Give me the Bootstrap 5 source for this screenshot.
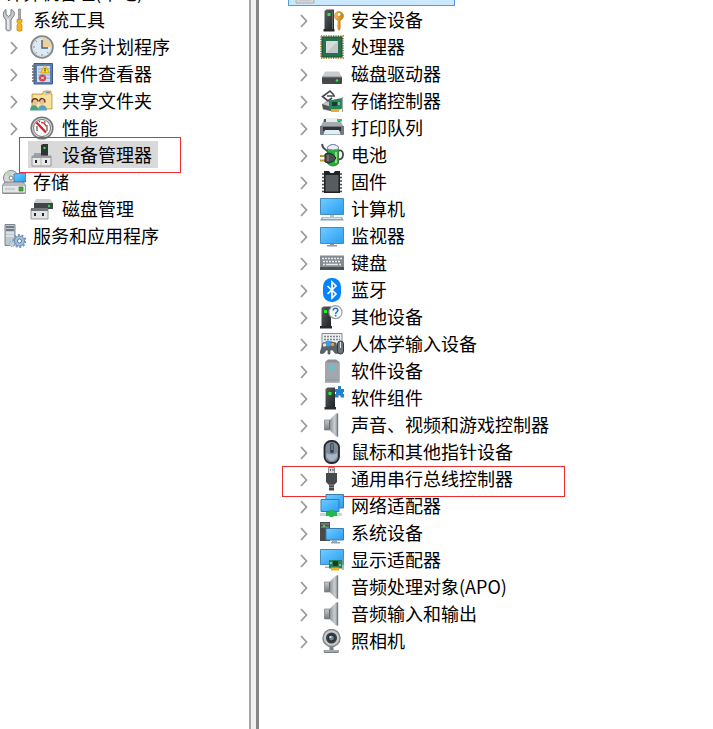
<!DOCTYPE html>
<html lang="zh-CN">
<head>
<meta charset="utf-8">
<meta name="viewport" content="width=device-width, initial-scale=1">
<title>计算机管理</title>
<link href="https://cdn.jsdelivr.net/npm/bootstrap@5.3.0/dist/css/bootstrap.min.css" rel="stylesheet">
<style>
  body { font-family: "Noto Sans CJK SC", sans-serif; font-size: 18px; line-height: 27px; color: #000; background: #fff; }
  .side-pane { flex: 0 0 249px; }
  .splitter { flex: 0 0 10px; background: #f0f0f0; border-left: 2px solid #a3a5ad; border-right: 3px solid #858585; }
  .tree { margin-top: -21px; }
  .tree-row { height: 27px; white-space: nowrap; }
  .side-pane .tree-row { padding-left: 2px; }
  .side-pane .tree-root { padding-left: 5px; }
  .main-pane .tree-row { padding-left: 33px; }
  .toggle { width: 28px; height: 27px; flex: none; line-height: 0; }
  .toggle svg { width: 10px; height: 16px; margin-left: 7px; margin-top: 2px; fill: none; stroke: #9a9a9a; stroke-width: 1.8; }
  .ico { width: 24px; height: 24px; flex: none; }
  .node-label { padding-left: 7px; }
  .side-pane .sub .node-label { padding-left: 8px; }
  .side-pane .tree-row.sub.leaf { padding-left: 28px; }
  .picked { background: #d9d9d9; padding: 0 6px 0 2px; }
  .leaf-plain { padding-left: 2px; }
  .root-picked { width: 167px; height: 27px; margin-left: -4px; background: #cce8ff; border: 1px solid #4a9be0; padding-left: 4px; }
  .callout-box { position: absolute; border: 1px solid #f02b2b; pointer-events: none; }
  .callout-side { left: 19px; top: -4px; width: 162px; height: 36px; }
  .callout-main { left: 23px; top: 1px; width: 283px; height: 31px; }
</style>
</head>
<body>
<svg width="0" height="0" class="position-absolute" aria-hidden="true">
  <defs>
    <linearGradient id="gBlue" x1="0" y1="0" x2="1" y2="1"><stop offset="0" stop-color="#74ccff"/><stop offset=".5" stop-color="#4bb5fb"/><stop offset="1" stop-color="#2e9cee"/></linearGradient>
    <linearGradient id="gSteel" x1="0" y1="0" x2="0" y2="1"><stop offset="0" stop-color="#c6cacd"/><stop offset="1" stop-color="#75797e"/></linearGradient>
    <linearGradient id="gSide" x1="0" y1="0" x2="1" y2="0"><stop offset="0" stop-color="#83888d"/><stop offset=".6" stop-color="#c9cdd0"/><stop offset="1" stop-color="#9a9fa4"/></linearGradient>
    <linearGradient id="gDark" x1="0" y1="0" x2="1" y2="1"><stop offset="0" stop-color="#5b5e60"/><stop offset="1" stop-color="#202325"/></linearGradient>
    <linearGradient id="gGold" x1="0" y1="0" x2="1" y2="0"><stop offset="0" stop-color="#f5bd54"/><stop offset="1" stop-color="#c47c16"/></linearGradient>
  </defs>
  <symbol id="chev" viewBox="0 0 10 16"><path d="M2 2l5.500 6L2 14"/></symbol>

  <symbol id="tools" viewBox="0 0 24 24">
    <path d="M4 1.500v5l2.500 2 2.500-2v-5c4 1 4.500 6 1 8.500L9 12v9c0 2.500-5 2.500-5 0v-9C.5 9 .5 3.500 4 1.500z" fill="#c9cccf" stroke="#777b80"/><path d="M6 11v10" stroke="#f4f4f4" stroke-width="1.500"/>
    <path d="M16.500 1h2v10h-2z" fill="#a7a9ac" stroke="#77797c" stroke-width=".6"/><path d="M15 11.500h5v3l-1 1 1 2v5q-2.500 1.500-5 0v-5l1-2-1-1z" fill="#f5b51b" stroke="#bd8206" stroke-width=".7"/>
  </symbol>
  <symbol id="clock" viewBox="0 0 24 24">
    <circle cx="12" cy="12" r="10.800" fill="#f1f3f5" stroke="#85888b" stroke-width="2"/><circle cx="12" cy="12" r="9.300" fill="#dfe9f4" stroke="#d4d6d8" stroke-width="1.200"/>
    <path d="M12 12V3a9 9 0 0 1 9 9z" fill="#efd196"/><path d="M12 5v8h6" fill="none" stroke="#49617f" stroke-width="1.500"/>
    <path d="M12 19v2M3 12h2M5.600 5.600l1.300 1.300M5.600 18.400l1.300-1.300M18.400 18.400l-1.300-1.300" stroke="#7d91a8"/>
  </symbol>
  <symbol id="events" viewBox="0 0 24 24">
    <path d="M4 1.500h18.500v20.500H4z" fill="#5f7fae" stroke="#3c5c8b"/><path d="M7 4h13v16H7z" fill="#cfdeef"/><path d="M8 7h12M8 10h12M8 13h12M8 16h12" stroke="#8eacd0"/>
    <path d="M2 4h4M2 7h4M2 10h4M2 13h4M2 16h4M2 19h4" stroke="#65676b" stroke-width="1.300"/><path d="M15 3l4.500 8h-9z" fill="#ffdc22" stroke="#d0a515" stroke-width=".8"/><path d="M15 6v3M15 9.500v1" stroke="#333"/>
    <circle cx="12.500" cy="16" r="3.600" fill="#d8404b"/><path d="M11.200 14.700l2.600 2.600M13.800 14.700l-2.600 2.600" stroke="#fff"/>
  </symbol>
  <symbol id="shared" viewBox="0 0 24 24">
    <path d="M2 5h10l2-3h7v3h1v15H2z" fill="#efcd78" stroke="#bc9442" stroke-width=".8"/><path d="M3 6h18v13H3z" fill="#f9e29d"/><path d="M16 3.500h4" stroke="#4e91d6" stroke-width="1.400"/>
    <path d="M0 21.500c0-7 8-7 8.500 0z" fill="#44a579"/><path d="M8 21.500c0-7 9-7 9 0z" fill="#5d9ecb"/><circle cx="5" cy="13.500" r="2.600" fill="#eabf99"/><circle cx="12" cy="13" r="2.600" fill="#eabf99"/>
    <path d="M2 13.500c0-5 6-4.500 6-1M9.500 12.500c0-4 5.500-4 5.500 1" fill="none" stroke="#5b3c25" stroke-width="1.500"/>
  </symbol>
  <symbol id="perf" viewBox="0 0 24 24">
    <circle cx="12" cy="12" r="10.800" fill="#dcdcdc" stroke="#77797b" stroke-width="1.600"/><circle cx="12" cy="12" r="8.500" fill="#fff" stroke="#777"/>
    <path d="M7 15V10M17 15V9M9 6l1-1M14 5.500l1.500 1" stroke="#555" stroke-width="1.200"/><path d="M6.500 6.500l9.500 10" stroke="#df1721" stroke-width="2.200"/><path d="M11 6.500q4 0 5 4" fill="none" stroke="#e53b43" stroke-width="1.500"/>
  </symbol>
  <symbol id="devmgr" viewBox="0 0 24 24">
    <path d="M11 2l2-1h5v13h-7z" fill="#303436"/><circle cx="14.500" cy="5" r="1.200" fill="#2de43b"/><path d="M4 10h7v3H4z" fill="#9fa1a3"/>
    <path d="M2 13h19v10H2z" fill="#e8e8e8" stroke="#96989a"/><path d="M2 13h19v2H2z" fill="#9b9d9f"/><path d="M5 17h2v3H5zM15 17h2v3h-2z" fill="#262829"/><path d="M11 15v8" stroke="#b4b6b8"/>
  </symbol>
  <symbol id="storage" viewBox="0 0 24 24">
    <circle cx="9" cy="8" r="7.500" fill="#d7dadd" stroke="#85898c"/><path d="M9 8L3 3a7 7 0 0 1 5-2z" fill="#b5d9bd"/><circle cx="9" cy="8" r="2" fill="#fff" stroke="#888"/>
    <path d="M12 4l12-1v9H12z" fill="url(#gBlue)" stroke="#34718f" stroke-width=".8"/><path d="M3 12h18l3 4v6q0 1.500-2 1.500H2Q0 23.500 0 22v-6z" fill="#b9bdc1" stroke="#71767b" stroke-width=".8"/>
    <path d="M1 16h22v6H1z" fill="#e3e6e8"/><path d="M17 17h4v4h-4z" fill="#42aa37" stroke="#427139" stroke-width=".7"/><path d="M3 19h10" stroke="#aeb2b6"/>
  </symbol>
  <symbol id="diskmgr" viewBox="0 0 24 24">
    <path d="M6 2h14l3 4H4z" fill="#c9cccf"/><path d="M4 6h19v6H4z" fill="#414548"/><circle cx="19" cy="9" r="1.200" fill="#26df45"/>
    <path d="M1 12h17v10H1z" fill="#e5e5e5" stroke="#989a9c"/><path d="M1 11h17v3H1z" fill="#737679"/><path d="M4 16h2v3H4zM12 16h2v3h-2z" fill="#262829"/>
  </symbol>
  <symbol id="services" viewBox="0 0 24 24">
    <path d="M3 .5h10v21H3z" fill="#c0c9d0" stroke="#7b858e"/><path d="M4 3h8M4 6h8" stroke="#58626c" stroke-width="1.500"/><path d="M4 9h8M4 12h8" stroke="#f4f6f8"/>
    <circle cx="17.500" cy="17" r="6" fill="none" stroke="#7798b8" stroke-width="2" stroke-dasharray="2 1.700"/><circle cx="17.500" cy="17" r="5" fill="#a5bfd8" stroke="#648bb0"/><circle cx="17.500" cy="17" r="2" fill="#fff" stroke="#4d7dad"/>
    <circle cx="10" cy="20" r="2.600" fill="#c0cfdd" stroke="#7899b8" stroke-dasharray="1 1"/>
  </symbol>

  <symbol id="security" viewBox="0 0 24 24">
    <path d="M4.500 3l2-1.500h7.500v20H4.500z" fill="url(#gDark)"/><path d="M3.500 21h11v2.500h-11z" fill="#27292b"/><path d="M7.500 5h3v3h-3z" fill="#20f22d"/><path d="M12.500 3v18" stroke="#686c6f"/>
    <circle cx="19" cy="8" r="4.500" fill="url(#gGold)" stroke="#bd8230" stroke-width=".6"/><circle cx="19" cy="6.500" r="1.400" fill="#fff"/><path d="M17.500 12h3v9l-1.500 2-1.500-2v-2l-1-1 1-1z" fill="url(#gGold)"/>
  </symbol>
  <symbol id="cpu" viewBox="0 0 24 24">
    <rect x="1" y="1" width="22" height="22" fill="none" stroke="#b18b38" stroke-width="2" stroke-dasharray="1.200 1.200"/><path d="M2 2h20v20H2z" fill="#25704f" stroke="#164f36"/><path d="M6 6h12v12H6z" fill="#d9dada"/><path d="M6 18L18 6v12z" fill="#c4c7c7"/>
  </symbol>
  <symbol id="hdd" viewBox="0 0 24 24"><path d="M5 9.500h14l3 6H2z" fill="#c9ccce"/><path d="M2 15h20v6q0 1-1 1H3q-1 0-1-1z" fill="#45494c"/><path d="M2 15h20" stroke="#85888b"/><circle cx="17" cy="18.500" r="1.300" fill="#28ef45"/></symbol>
  <symbol id="storctl" viewBox="0 0 24 24">
    <path d="M2 15l4-3h10v8l-4 2-9-1z" fill="#bfc3c6"/><path d="M2 15l9 3v4l-8-2z" fill="#505457"/><path d="M14 6l-4-4-7.500 5.500L8 12l4-3M7 7h8" fill="none" stroke="#45484b" stroke-width="1.700"/>
    <path d="M9 11.500l13-2.500v10.500l-2 1H9z" fill="#26855c"/><path d="M12 13h5v4h-5z" fill="#193f2f"/><path d="M22.500 8v15" stroke="#a3a8aa" stroke-width="1.200"/><path d="M11 20h8v3h-8z" fill="#efac20"/><path d="M18 13h2v3h-2z" fill="#79c4a0"/>
  </symbol>
  <symbol id="printer" viewBox="0 0 24 24">
    <path d="M4 3h16l1 5H3z" fill="#54585b"/><path d="M6 2h12v5H6z" fill="#e9edf0"/><path d="M3 6h18l3 5H0z" fill="#a5abb0"/><path d="M0 10h24v8q0 1-1 1H1q-1 0-1-1z" fill="#747a7f"/><path d="M3 11h18v4H3z" fill="#303437"/><path d="M5 14h14l1.500 4.500h-17z" fill="#dceefa"/><path d="M17 3h5v2.500h-5z" fill="#27ce65"/>
  </symbol>
  <symbol id="battery" viewBox="0 0 24 24">
    <path d="M2 1c1 7 5 4 6 9M18 8c6-3 6 6 3 8l-5 1" fill="none" stroke="#44484b" stroke-width="1.800"/><path d="M7.500 4q5.500-5 11 0v16.500q-5.500 5-11 0z" fill="#24b23a" stroke="#397e43"/><path d="M7.500 4q5.500-5 11 0v2q-5.500 2-11 0z" fill="#eceefb" stroke="#8b8bb4"/><path d="M16 9v11" stroke="#85e278" stroke-width="2" fill="none"/>
    <path d="M0 13h6M0 17.500h6" stroke="#c7932e" stroke-width="2"/><path d="M5 11l4-1q5 1 7 5-2 4-7 5l-4-1z" fill="#4c4e50" stroke="#242627"/><path d="M8 12v6" stroke="#909395"/>
  </symbol>
  <symbol id="firmware" viewBox="0 0 24 24">
    <path d="M2 4h20M2 7.500h20M2 11h20M2 14.500h20M2 18h20M2 21.500h20" stroke="#45484a" stroke-width="1.600"/><path d="M4 1h5l1.500 2h3L15 1h5v22H4z" fill="#202324"/><path d="M5.500 5h13v16.500h-13z" fill="#585c5e"/>
  </symbol>
  <symbol id="computer" viewBox="0 0 24 24"><path d="M.5 1.500h23v16H.5z" fill="url(#gBlue)" stroke="#428dbb"/><path d="M10 18h4v2h-4z" fill="#b3c2cc"/><path d="M2 20h20l2 3.500H0z" fill="#8fa3b1"/><path d="M3 20.500h18l1 1.500H2z" fill="#d8e5ec"/></symbol>
  <symbol id="monitor" viewBox="0 0 24 24"><path d="M.5 3.500h23v16H.5z" fill="url(#gBlue)" stroke="#428dbb"/><path d="M10 20h4v1h3v1.500H7V21h3z" fill="#8a9ba7"/></symbol>
  <symbol id="keyboard" viewBox="0 0 24 24"><path d="M0 4.500h24v14.500H0z" fill="#858b91"/><path d="M0 16h24v3H0z" fill="#4b5257"/><path d="M2 7.500h20M3 10.500h18" stroke="#e8ebed" stroke-width="1.500" stroke-dasharray="2 1"/><path d="M3 13.500h2M6 13.500h12M19 13.500h2" stroke="#e8ebed" stroke-width="1.500"/></symbol>
  <symbol id="bluetooth" viewBox="0 0 24 24"><rect x="3" y="0" width="18" height="24" rx="8.500" fill="#0683fb"/><path d="M7.500 8l8.500 8-4 4V4l4 4-8.500 8" fill="none" stroke="#fff" stroke-width="1.700"/></symbol>
  <symbol id="other" viewBox="0 0 24 24"><path d="M1.500 3l2-1.500h7.500v20H1.500z" fill="url(#gDark)"/><path d="M0 21h12v2.500H0z" fill="#27292b"/><path d="M4 5h3v3H4z" fill="#22ed2f"/><circle cx="15.500" cy="7.200" r="6.500" fill="#f6f8f9" stroke="#999fa3" stroke-width="1.200"/><path d="M13.200 5.500q0-2.200 2.300-2.200t2.300 2.200q0 1-1.100 1.700t-1.100 2M15.600 10v1.600" fill="none" stroke="#2f77c5" stroke-width="1.600"/></symbol>
  <symbol id="hid" viewBox="0 0 24 24">
    <path d="M2 1.500h20v13H2z" fill="#eceff1" stroke="#858b91"/><path d="M4 4.500h16M4 7.500h16" stroke="#7f868d" stroke-width="1.400" stroke-dasharray="2 1"/>
    <path d="M3 11q6-3 13 0l2 10q-3 2-5-3h-3v4H8v-4H6q-2 5-6 3z" fill="#5b636a" stroke="#474e53" stroke-width=".7"/><circle cx="8" cy="11.500" r="3" fill="#359df0"/><circle cx="12.500" cy="12.500" r="1.800" fill="#ee982e"/><circle cx="4.500" cy="13" r="1.700" fill="#f0e4e0"/>
    <rect x="17.500" y="9" width="6" height="13" rx="3" fill="#6c757d" stroke="#30363b"/><path d="M20.500 10v6" stroke="#e4e7e9"/>
  </symbol>
  <symbol id="softdev" viewBox="0 0 24 24"><path d="M5 3l3-2.500h8L19.500 3v20.500H5z" fill="#899197"/><path d="M5 3.500h14.500v20H5z" fill="#a0a8ae"/><circle cx="12" cy="8.500" r="2" fill="#3ad3ee"/><path d="M6 21h12" stroke="#8d959b"/></symbol>
  <symbol id="softcomp" viewBox="0 0 24 24"><path d="M5.500 3l2-1.500H15V21H5.500z" fill="url(#gDark)"/><path d="M4.500 21H16v2.500H4.500z" fill="#292c2e"/><path d="M8.500 6h3v3h-3z" fill="#25ed32"/><path d="M15 3h3V0h3v3h3v3h-1v2h1v3.500h-3.500v-2h-2v2H15V8h1V6h-1z" fill="#2583cc"/></symbol>
  <symbol id="speaker" viewBox="0 0 24 24"><path d="M4.500 7h5v10h-5z" fill="url(#gSteel)" stroke="#777c81" stroke-width=".7"/><path d="M9 7.500L16 .5h2v23h-2l-7-7z" fill="url(#gSide)"/><path d="M17.500.5v23" stroke="#777d82" stroke-width="1.400"/><path d="M9.500 7.500v9" stroke="#666b70"/></symbol>
  <symbol id="mouse" viewBox="0 0 24 24"><rect x="4.500" y="1" width="14.500" height="22" rx="6.500" fill="#7d8b9a" stroke="#262a2e" stroke-width="1.800"/><path d="M6.500 13q5 3 10.500 0v4q-5.200 8-10.500 0z" fill="#a8b7c7"/><rect x="10.200" y="3" width="3.500" height="10" rx="1.500" fill="#353e48"/><path d="M12 4v6" stroke="#a2aab2"/></symbol>
  <symbol id="usb" viewBox="0 0 24 24"><path d="M8.500.5h6v6h-6z" fill="#d8d9da" stroke="#888b8d"/><path d="M10 2h1v2h-1zM12.500 2h1v2h-1z" fill="#555"/><path d="M6 6h11v9l-3 3v5.500H9V18l-3-3z" fill="#46494b"/><path d="M9 18h5M9 20.500h5" stroke="#8a8d8f"/></symbol>
  <symbol id="network" viewBox="0 0 24 24"><path d="M6 .5h17.500V14H6z" fill="url(#gBlue)" stroke="#397ca9"/><path d="M1 5.500h18V17.500H1z" fill="url(#gBlue)" stroke="#397ca9"/><path d="M0 19h22v3H0z" fill="#c9d3d9"/><path d="M9 16h5v2h3v4h-3l-1 1h-3l-1-1H6v-4h3z" fill="#26b64e"/></symbol>
  <symbol id="system" viewBox="0 0 24 24"><path d="M0 1h10v19H0z" fill="#464a4d"/><path d="M1 3h8M1 6h8" stroke="#979da1"/><path d="M3 4h2v2H3z" fill="#2fe941"/><path d="M6 7.500h17.500V19H6z" fill="url(#gBlue)" stroke="#397ca9"/><path d="M12 19.500h5V21h3v1.500h-9V21h1z" fill="#96a6b0"/></symbol>
  <symbol id="display" viewBox="0 0 24 24"><path d="M.5 1.500h23v15H.5z" fill="url(#gBlue)" stroke="#428dbb"/><path d="M5 18.500h6V20H5z" fill="#a2afb8"/><path d="M9 12h13v8.500H9z" fill="#278256"/><path d="M13 13h5v5h-5z" fill="#183d2c"/><path d="M23 10v12" stroke="#888f93" stroke-width="1.300"/><path d="M11 19.500h8v3h-8z" fill="#efaf25"/><path d="M10 15h2M19 17h2" stroke="#9fd6b4" stroke-width="1.500"/></symbol>
  <symbol id="camera" viewBox="0 0 24 24"><path d="M9.500 17h4v4h5q1 3-1 3H5q-2 0-1-3h5.500z" fill="#777d80"/><path d="M4.500 22h13.500" stroke="#d3d6d8"/><circle cx="11.500" cy="9" r="8.500" fill="#c8cbcd" stroke="#85898c" stroke-width="1.500"/><circle cx="11.500" cy="9" r="5.500" fill="#383d41"/><circle cx="11.500" cy="9" r="3" fill="#6d8798" stroke="#1f2426"/><circle cx="10.500" cy="8" r="1.100" fill="#deedf5"/></symbol>
  <symbol id="host" viewBox="0 0 24 24"><path d="M3 2h18v20H3z" fill="#d5d9dc" stroke="#a8adb1"/><path d="M6 19h12" stroke="#b6babd"/></symbol>
</svg>

<div class="d-flex min-vh-100 overflow-hidden">
  <nav class="side-pane" aria-label="控制台树">
    <ul class="tree list-unstyled mb-0">
      <li class="tree-row tree-root">计算机管理(本地)</li>
      <li class="tree-row d-flex align-items-center"><svg class="ico"><use href="#tools"/></svg><span class="node-label">系统工具</span></li>
      <li class="tree-row sub d-flex align-items-center"><button type="button" class="toggle btn p-0 border-0 text-start" aria-label="展开 任务计划程序"><svg><use href="#chev"/></svg></button><svg class="ico"><use href="#clock"/></svg><span class="node-label">任务计划程序</span></li>
      <li class="tree-row sub d-flex align-items-center"><button type="button" class="toggle btn p-0 border-0 text-start" aria-label="展开 事件查看器"><svg><use href="#chev"/></svg></button><svg class="ico"><use href="#events"/></svg><span class="node-label">事件查看器</span></li>
      <li class="tree-row sub d-flex align-items-center"><button type="button" class="toggle btn p-0 border-0 text-start" aria-label="展开 共享文件夹"><svg><use href="#chev"/></svg></button><svg class="ico"><use href="#shared"/></svg><span class="node-label">共享文件夹</span></li>
      <li class="tree-row sub d-flex align-items-center"><button type="button" class="toggle btn p-0 border-0 text-start" aria-label="展开 性能"><svg><use href="#chev"/></svg></button><svg class="ico"><use href="#perf"/></svg><span class="node-label">性能</span></li>
      <li class="tree-row sub leaf position-relative"><span class="picked d-inline-flex align-items-center"><svg class="ico"><use href="#devmgr"/></svg><span class="node-label">设备管理器</span></span><span class="callout-box callout-side"></span></li>
      <li class="tree-row d-flex align-items-center"><svg class="ico"><use href="#storage"/></svg><span class="node-label">存储</span></li>
      <li class="tree-row sub leaf"><span class="leaf-plain d-inline-flex align-items-center"><svg class="ico"><use href="#diskmgr"/></svg><span class="node-label">磁盘管理</span></span></li>
      <li class="tree-row d-flex align-items-center"><svg class="ico"><use href="#services"/></svg><span class="node-label">服务和应用程序</span></li>
    </ul>
  </nav>
  <div class="splitter" role="separator"></div>
  <main class="main-pane flex-grow-1">
    <ul class="tree list-unstyled mb-0" id="devices">
      <li class="tree-row"><div class="root-picked d-flex align-items-center"><svg class="ico"><use href="#host"/></svg></div></li>
    </ul>
  </main>
</div>
<script src="https://cdn.jsdelivr.net/npm/bootstrap@5.3.0/dist/js/bootstrap.bundle.min.js"></script>
<script>
  const devices = [
    ["security", "安全设备"], ["cpu", "处理器"], ["hdd", "磁盘驱动器"], ["storctl", "存储控制器"],
    ["printer", "打印队列"], ["battery", "电池"], ["firmware", "固件"], ["computer", "计算机"],
    ["monitor", "监视器"], ["keyboard", "键盘"], ["bluetooth", "蓝牙"], ["other", "其他设备"],
    ["hid", "人体学输入设备"], ["softdev", "软件设备"], ["softcomp", "软件组件"],
    ["speaker", "声音、视频和游戏控制器"], ["mouse", "鼠标和其他指针设备"], ["usb", "通用串行总线控制器"],
    ["network", "网络适配器"], ["system", "系统设备"], ["display", "显示适配器"],
    ["speaker", "音频处理对象(APO)"], ["speaker", "音频输入和输出"], ["camera", "照相机"]
  ];
  document.getElementById("devices").insertAdjacentHTML("beforeend", devices.map(([icon, name]) =>
    `<li class="tree-row d-flex align-items-center position-relative"><button type="button" class="toggle btn p-0 border-0 text-start" aria-label="展开 ${name}"><svg><use href="#chev"/></svg></button><svg class="ico"><use href="#${icon}"/></svg><span class="node-label">${name}</span>${icon === "usb" ? '<span class="callout-box callout-main"></span>' : ""}</li>`
  ).join(""));
</script>
</body>
</html>
